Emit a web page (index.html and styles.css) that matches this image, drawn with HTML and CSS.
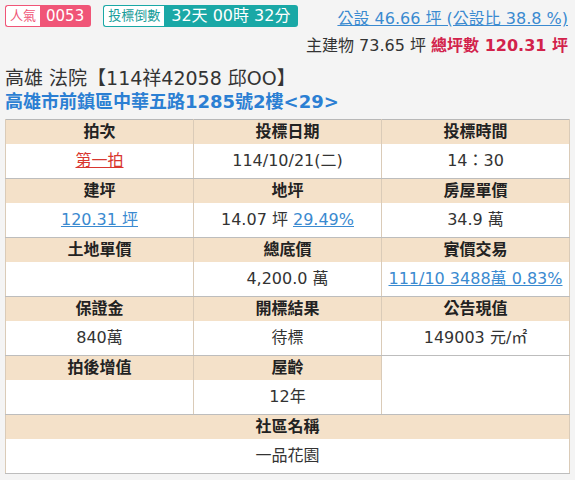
FILE: index.html
```html
<!DOCTYPE html>
<html lang="zh-Hant">
<head>
<meta charset="utf-8">
<link rel="stylesheet" href="styles.css">
</head>
<body>
<div class="top">
  <div class="badges">
    <span class="badge pink"><span class="lbl">人氣</span><span class="val">0053</span></span>
    <span class="badge teal"><span class="lbl">投標倒數</span><span class="val">32天 00時 32分</span></span>
  </div>
  <div class="area">
    <a class="pub">公設 46.66 坪 (公設比 38.8 %)</a>
    <div class="total">主建物 73.65 坪 <span class="sum">總坪數 120.31 坪</span></div>
  </div>
</div>
<div class="title">高雄 法院【114祥42058 邱OO】</div>
<div class="addr">高雄市前鎮區中華五路1285號2樓&lt;29&gt;</div>
<table class="info">
  <tr class="h"><td>拍次</td><td>投標日期</td><td>投標時間</td></tr>
  <tr class="v"><td><a class="red">第一拍</a></td><td>114/10/21(二)</td><td>14：30</td></tr>
  <tr class="h"><td>建坪</td><td>地坪</td><td>房屋單價</td></tr>
  <tr class="v"><td><a class="blue">120.31 坪</a></td><td>14.07 坪 <a class="blue">29.49%</a></td><td>34.9 萬</td></tr>
  <tr class="h"><td>土地單價</td><td>總底價</td><td>實價交易</td></tr>
  <tr class="v"><td></td><td>4,200.0 萬</td><td><a class="blue">111/10 3488萬 0.83%</a></td></tr>
  <tr class="h"><td>保證金</td><td>開標結果</td><td>公告現值</td></tr>
  <tr class="v"><td>840萬</td><td>待標</td><td>149003 元/㎡</td></tr>
  <tr class="h"><td>拍後增值</td><td>屋齡</td><td class="empty" rowspan="2"></td></tr>
  <tr class="v"><td></td><td>12年</td></tr>
  <tr class="h"><td colspan="3">社區名稱</td></tr>
  <tr class="v"><td colspan="3">一品花園</td></tr>
</table>
</body>
</html>
```
FILE: styles.css
```css
html, body {
  margin: 0;
  padding: 0;
}
body {
  background: #f4f4f4;
  padding: 5px;
  font-family: "DejaVu Sans", "Noto Sans CJK TC", sans-serif;
  color: #333;
}
.top {
  display: flex;
  justify-content: space-between;
  align-items: flex-start;
  height: 58px;
}
.badges {
  display: flex;
  gap: 12px;
}
.badge {
  display: inline-flex;
  height: 22px;
}
.badge .lbl {
  background: #fff;
  font-size: 13px;
  line-height: 20px;
  padding: 0 4px;
  border: 1px solid;
  border-right: 0;
  border-radius: 3px 0 0 3px;
}
.badge .val {
  color: #fff;
  line-height: 22px;
  padding: 0 6px;
  border-radius: 0 3px 3px 0;
}
.pink .lbl { color: #f05577; border-color: #f05577; }
.pink .val { background: #f05577; font-size: 15px; padding: 0 7px 0 6px; }
.teal .lbl { color: #189d9a; border-color: #1aa8a6; }
.teal .val { background: #1aa8a6; font-size: 16px; padding: 0 8px 0 7px; }
.area {
  text-align: right;
  padding-top: 2px;
  padding-right: 2px;
}
.pub {
  color: #3a8ad0;
  text-decoration: underline;
  font-size: 16px;
  line-height: 24px;
}
.total {
  font-size: 16px;
  line-height: 24px;
  margin-top: 3px;
  color: #333;
}
.total .sum {
  color: #d2224b;
  font-weight: bold;
}
.title {
  font-size: 19px;
  line-height: 23px;
  color: #333;
  margin-top: 4px;
}
.addr {
  font-size: 18px;
  line-height: 23px;
  font-weight: bold;
  color: #2b7fd3;
  margin-bottom: 6px;
}
.info {
  width: 100%;
  table-layout: fixed;
  border-collapse: collapse;
  border: 1px solid #b8b8b8;
  background: #fff;
  font-size: 16px;
  text-align: center;
}
.info td {
  padding: 0;
  border-left: 1px solid #dacbb8;
  border-right: 1px solid #dacbb8;
}
.info tr.h td {
  background: #f4e1c9;
  height: 24px;
  font-weight: bold;
  color: #222;
  line-height: 24px;
}
.info tr.h td.empty {
  background: #fff;
  border-bottom: 1px solid #bdbdbd;
}
.info tr.v td {
  height: 34px;
  line-height: 34px;
  border-bottom: 1px solid #bdbdbd;
}
.red {
  color: #d8362f;
  text-decoration: underline;
}
.blue {
  color: #3a8ad0;
  text-decoration: underline;
}
```
